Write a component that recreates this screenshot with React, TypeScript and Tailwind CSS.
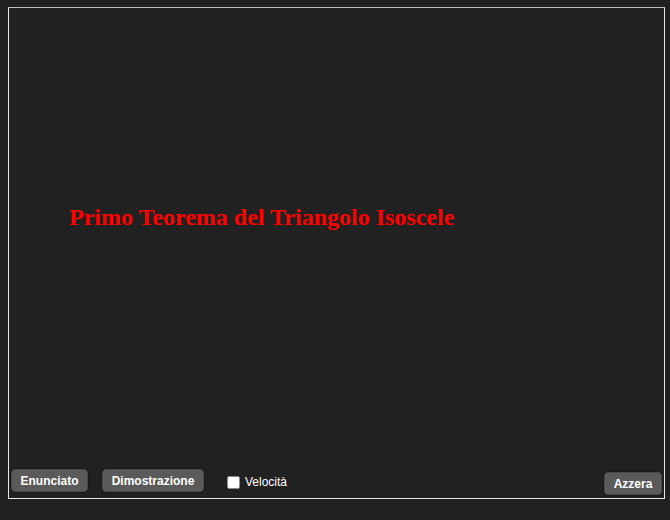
import React from "react";

const btn =
  "h-[23px] rounded-[4px] border border-[#4a4a4a] bg-[#5a5a5a] text-[12px] font-bold text-white leading-none shadow-[0_0_2px_rgba(0,0,0,0.6)]";

export default function App() {
  return (
    <div
      className="w-[670px] h-[520px] bg-[#212121] pt-[7px] pl-[8px]"
      style={{ fontFamily: '"Liberation Sans", Arial, sans-serif' }}
    >
      <div className="w-[657px] h-[492px] border border-[#e8e8e8] border-t-[#bdbdbd] bg-[#212121] flex flex-col">
        <div className="flex-1 pl-[60px] pt-[197px]">
          <h1
            className="text-[24px] font-bold text-[#ff0000] leading-none"
            style={{ fontFamily: '"Liberation Serif", "Times New Roman", serif' }}
          >
            Primo Teorema del Triangolo Isoscele
          </h1>
        </div>
        <div className="flex items-start pl-[2px] pr-[2px] pb-[3px]">
          <button className={`${btn} w-[77px]`}>Enunciato</button>
          <button className={`${btn} w-[102px] ml-[14px]`}>Dimostrazione</button>
          <label className="ml-[23px] mt-[4px] flex items-center gap-[5px] text-[12px] text-white">
            <span className="w-[13px] h-[13px] bg-white rounded-[2px] border border-[#888]" />
            Velocità
          </label>
          <button className={`${btn} w-[58px] ml-auto mt-[3px]`}>Azzera</button>
        </div>
      </div>
    </div>
  );
}
